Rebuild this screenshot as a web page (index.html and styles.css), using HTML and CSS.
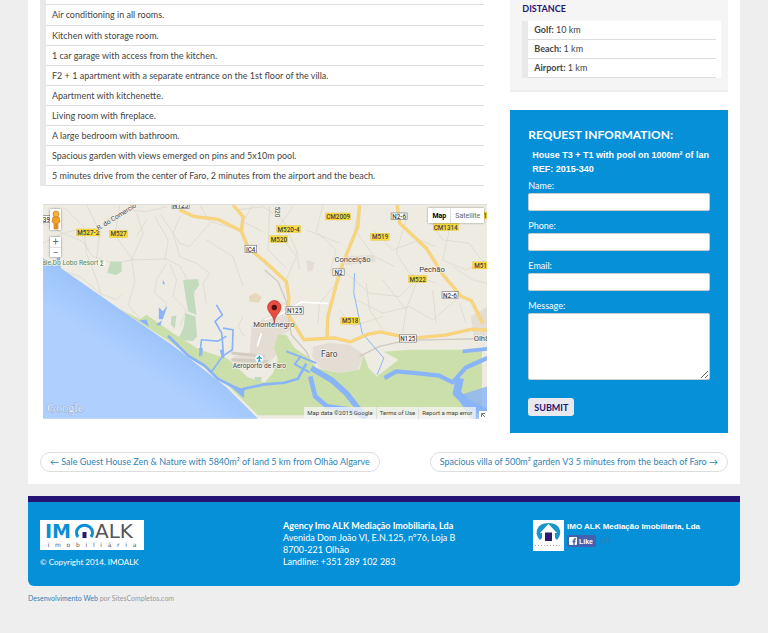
FILE: index.html
```html
<!DOCTYPE html>
<html lang="en">
<head>
  <meta charset="UTF-8">
  <title>House T3 + T1 with pool - IMOALK</title>
  <meta name="viewport" content="width=device-width, initial-scale=1.0">
  <link rel="stylesheet" href="styles.css">
</head>
<body>
  <div class="page">
    <div class="columns">
      <main class="main">
        <ul class="features">
          <li>Air conditioning in all rooms.</li>
          <li>Kitchen with storage room.</li>
          <li>1 car garage with access from the kitchen.</li>
          <li>F2 + 1 apartment with a separate entrance on the 1st floor of the villa.</li>
          <li>Apartment with kitchenette.</li>
          <li>Living room with fireplace.</li>
          <li>A large bedroom with bathroom.</li>
          <li>Spacious garden with views emerged on pins and 5x10m pool.</li>
          <li>5 minutes drive from the center of Faro, 2 minutes from the airport and the beach.</li>
        </ul>

        <!-- Location map -->
        <div class="map">
          <svg class="map-canvas" viewBox="9 15 1335 642" role="img" aria-label="Map of Montenegro, Faro">
            <defs>
              <linearGradient id="sea" gradientUnits="userSpaceOnUse" x1="330" y1="400" x2="270" y2="490">
                <stop offset="0" stop-color="#9ec5fb"/>
                <stop offset="1" stop-color="#aecfff"/>
              </linearGradient>
            </defs>
            <rect x="9" y="15" width="1335" height="642" fill="#eeebe3"/>

            <!-- built-up areas -->
            <g fill="#e3ddd3">
              <path d="M675 355l35-20 35 15 10 40-30 15-8 50-32 40-100 5-5-30 50-10 5-80z"/>
              <path d="M820 440l50-10 60 5 45 30-20 45-55 10-60-15-22-35z"/>
              <path d="M1295 350l49-30v90l-40 5z"/>
              <path d="M800 180l25 8-5 24-15 4z"/>
              <path d="M910 170l90-5 10 20-90 10z"/>
            </g>
            <path d="M575 460l100 10M575 480l110 5" stroke="#d2ccc2" stroke-width="9" fill="none"/>
            <path d="M628 290l20-12 18 14-8 16-28-2z" fill="#e6d9bb"/>

            <!-- local roads -->
            <g fill="none" stroke="#d9d5cd" stroke-width="2">
              <path d="M9 130l60-30 60 25 30 45 60 20 60-10 100-3 40 20 50 90"/>
              <path d="M70 20l60 60 10 80 30 80 15 50M140 15l40 80-10 80M240 15l-15 90 50 70 10 70-20 70 35 40"/>
              <path d="M290 40l20 60-35 80M320 60l-30 50M345 50l40 70-10 60M360 40l60 90 30 10 60-70"/>
              <path d="M420 50l-20 50 20 70 50 20 40 30-20 30 10 60M390 190l20 50-10 50 40 40-20 50"/>
              <path d="M380 190l-30 50-5 40 35 30-10 40M9 70l60 30 40-10M30 200l90 30 60 50 50 20 20-20"/>
              <path d="M200 60l60-30 60 5 60-15M640 15l-30 50 60 30M480 15l30 50 90 25M500 120l80 50 30 90"/>
              <path d="M590 30l80-10 60 40 40 90 10 60M690 20l-5 130 55 55M760 20l-50 70 60 80-30 70"/>
              <path d="M850 15l-20 80 60 55-20 70M800 90l100 40M900 240l-60 70-5 60M960 20l-15 70 60 80 60 30"/>
              <path d="M1000 90l60 60 80-30 50 20M1100 60l-30 100 40 60 80 30M910 210l80 70 90 10 60-60"/>
              <path d="M950 300l80 40 80-20 70 40 70-60M980 250l10 80 40 60M1030 240l70 90-10 70M1130 250l-30 80"/>
              <path d="M1170 60l40 60 80 10 50 70M1230 90l-20 90 70 30 60-30M1180 270l10 100M1260 310l20 60"/>
              <path d="M1240 200l60 40 44 10M900 330l40 50 90-30M700 300l60 20M610 350l-15 30 20 30M655 400l15 35"/>
            </g>
            <g fill="none" stroke="#fff" stroke-width="5">
              <path d="M720 345l65-38 80 4M675 360l45-15M665 400l-12 40"/>
            </g>
            <path d="M675 210l40 35 25 60 15 100 45 50 25 55M960 470l60-30 80-18 244-6" fill="none" stroke="#cfcac4" stroke-width="4"/>

            <!-- woods -->
            <g fill="#c3dbbd">
              <path d="M212 185h33v30l-15 10-28-6z"/>
              <path d="M430 240l45-3 3 20-16 20 8 68-25-10-10-60z"/>
              <path d="M437 340l30 10 5 60-12 14-45-4 16-36z"/>
              <path d="M395 350l15-3-5 40-12-12z"/>
            </g>

            <!-- sea and nature reserve -->
            <path d="M9 175l51 28 180 125 160 110 160 125 95 94H9z" fill="url(#sea)"/>
            <path d="M235 325l65 33 20-13 80 55 80 50 85 28 60 55 50 15 25-28 15-40-12-35 12-40h25l25 40 45 30 20 30 70 15 60-10 13-45 14 40 25 25 65-50-45-24 80-6h216v197H655l-95-94-160-120z" fill="#cbdfaa"/>
            <path d="M645 532h22l-4 15-17-3z" fill="#c3dbbd"/>

            <!-- lagoon channels -->
            <g fill="none" stroke="#8ab4f8" stroke-linejoin="round">
              <path d="M385 408l60 60 50 30 40 40 65 32 75-16 60-5 40-12 25-45" stroke-width="8"/>
              <path d="M530 315l18 30-22 20 20 35 6 75M480 470l5-50 50 4 25-15M550 385l30 5-2 60-30 20-32 45" stroke-width="5"/>
              <path d="M740 455l40 15 50 20M785 468l-20 25 45 25" stroke-width="6"/>
              <path d="M815 505l60 35 45 40 60 77" stroke-width="17"/>
              <path d="M812 530l15 60 35 30 70 10 40 20" stroke-width="14"/>
              <path d="M1035 535l35-20 60 5 70 8 40 20 40-45 64-28" stroke-width="13"/>
              <path d="M1262 535l-10 45 30 30 62 30" stroke-width="24"/>
              <path d="M1270 455l74-8" stroke-width="11"/>
              <path d="M945 220l-2 60 25 120 65 75-20 50" stroke-width="3"/>
            </g>
            <g fill="#8ab4f8">
              <path d="M357 322l12 12 14-16-14 40h-12zM298 362l22-3 8 22zM348 375l18-13-4 15z"/>
              <path d="M50 175l10-3 2 32-10-5zM370 240l6 14-8-2zM560 550l55 20-3 25zM477 445h12l-2 28zM540 450h12l-5 28z"/>
              <path d="M1250 590l94-30v97h-50z" opacity=".8"/>
            </g>

            <!-- main roads -->
            <g fill="none" stroke-linejoin="round">
              <g stroke="#f0d084" stroke-width="10">
                <path d="M420 30l45 20 70 8 70 35 20 50 50 42 65 60 8 50-5 45 50 80 90-6 50 12 50-22 40-8 90 20 105-10 80-18 60 4 66-24"/>
                <path d="M580 15l30 35-5 45M960 15l-5 65-45 110-20 65-25 95-3 65M1073 15l8 55 80 75 50 80 55 65 30 12 35 70"/>
              </g>
              <g stroke="#fbd678" stroke-width="6">
                <path d="M420 30l45 20 70 8 70 35 20 50 50 42 65 60 8 50-5 45 50 80 90-6 50 12 50-22 40-8 90 20 105-10 80-18 60 4 66-24"/>
                <path d="M580 15l30 35-5 45M960 15l-5 65-45 110-20 65-25 95-3 65M1073 15l8 55 80 75 50 80 55 65 30 12 35 70"/>
              </g>
            </g>

            <!-- road shields -->
            <g class="shield-yellow">
              <rect x="110" y="87" width="70" height="21"/><text x="145" y="105">M527-2</text>
              <rect x="209" y="91" width="54" height="22"/><text x="236" y="109">M527</text>
              <rect x="858" y="39" width="75" height="21"/><text x="896" y="57">CM2009</text>
              <rect x="711" y="77" width="72" height="21"/><text x="747" y="95">M520-4</text>
              <rect x="691" y="107" width="53" height="21"/><text x="718" y="125">M520</text>
              <rect x="994" y="100" width="55" height="21"/><text x="1022" y="118">M519</text>
              <rect x="1182" y="71" width="75" height="21"/><text x="1219" y="89">CM1314</text>
              <rect x="1107" y="227" width="55" height="21"/><text x="1135" y="245">M522</text>
              <rect x="1300" y="186" width="55" height="21"/><text x="1329" y="204">M516</text>
              <rect x="904" y="352" width="55" height="21"/><text x="932" y="370">M518</text>
              <rect x="1330" y="36" width="30" height="21"/><text x="1338" y="54">1</text>
            </g>
            <g class="shield-white">
              <rect x="-5" y="47" width="46" height="20"/><text x="18" y="65">N396</text>
              <rect x="397" y="6" width="51" height="20"/><text x="422" y="24">N125</text>
              <rect x="616" y="136" width="35" height="22"/><text x="633" y="155">IC4</text>
              <rect x="1055" y="39" width="48" height="20"/><text x="1079" y="57">N2-6</text>
              <rect x="880" y="207" width="34" height="20"/><text x="897" y="225">N2</text>
              <rect x="1208" y="275" width="48" height="20"/><text x="1232" y="293">N2-6</text>
              <rect x="739" y="321" width="52" height="22"/><text x="765" y="340">N125</text>
              <rect x="1080" y="405" width="51" height="22"/><text x="1105" y="424">N125</text>
            </g>

            <!-- place names -->
            <g class="place">
              <text x="939" y="187">Conceição</text>
              <text x="1178" y="216">Pechão</text>
              <text x="703" y="382">Montenegro</text>
              <text class="city" x="869" y="471">Faro</text>
              <text x="1333" y="424">Olhão</text>
              <text class="small" x="659" y="506">Aeroporto de Faro</text>
              <text class="park" x="91" y="196">ale Do Lobo Resort</text>
              <text class="small" x="233" y="56" transform="rotate(-32 233 56)">R. do Comercio</text>
              <text class="small" x="718" y="36" transform="rotate(90 712 30)">520</text>
            </g>
            <circle cx="186" cy="190" r="12" fill="#f6f5ee"/>
            <path d="M190 183h-8l5 7-5 7h8" fill="none" stroke="#5d9b63" stroke-width="3"/>
            <circle cx="659" cy="476" r="13" fill="#fff" stroke="#b9d9e8" stroke-width="2"/>
            <path d="M659 467v17M651 477l8-5 8 5M655 484h8" fill="none" stroke="#2ba3cf" stroke-width="4"/>

            <!-- marker -->
            <path d="M704 371c0-26-20-31-20-49a20 20 0 0 1 40 0c0 18-20 23-20 49z" fill="#ea4b43" stroke="#a72c26" stroke-width="2"/>
            <circle cx="704" cy="323" r="8" fill="#4f100d"/>
            <text class="watermark" x="21" y="637">Google</text>
          </svg>

          <div class="map-tools">
            <button class="pegman" type="button" aria-label="Street View">
              <svg viewBox="0 0 10 20" width="10" height="20">
                <path d="M2 7h6l1 5-2 1v6H3v-6l-2-1z" fill="#f3a229" stroke="#c87a12" stroke-width=".7"/>
                <circle cx="5" cy="4" r="3" fill="#f7b344" stroke="#c87a12" stroke-width=".7"/>
                <path d="M5 13v5" stroke="#c87a12"/>
              </svg>
            </button>
            <div class="zoom">
              <button type="button" aria-label="Zoom in">+</button>
              <button type="button" aria-label="Zoom out">−</button>
            </div>
          </div>
          <div class="map-types">
            <button class="active" type="button">Map</button>
            <button type="button">Satellite</button>
          </div>
          <div class="map-legal">
            <span>Map data ©2015 Google</span>
            <a href="#">Terms of Use</a>
            <a href="#">Report a map error</a>
          </div>
          <button class="map-expand" type="button" aria-label="Overview map">
            <svg viewBox="0 0 8 8" width="8" height="8"><path d="M2.500 6V2.500H6M2.500 2.500l3.500 3.500" fill="none" stroke="#777"/></svg>
          </button>
        </div>
      </main>

      <aside class="sidebar">
        <section class="distance">
          <h3>DISTANCE</h3>
          <ul>
            <li><strong>Golf:</strong> 10 km</li>
            <li><strong>Beach:</strong> 1 km</li>
            <li><strong>Airport:</strong> 1 km</li>
          </ul>
        </section>

        <form class="request">
          <h2>REQUEST INFORMATION:</h2>
          <input class="plain" type="text" aria-label="Property" value="House T3 + T1 with pool on 1000m² of lan" readonly>
          <input class="plain" type="text" aria-label="Reference" value="REF: 2015-340" readonly>
          <label for="name">Name:</label>
          <input class="field" type="text" id="name">
          <label for="phone">Phone:</label>
          <input class="field" type="text" id="phone">
          <label for="email">Email:</label>
          <input class="field" type="email" id="email">
          <label for="message">Message:</label>
          <textarea class="field" id="message"></textarea>
          <button class="submit" type="submit">SUBMIT</button>
        </form>
      </aside>
    </div>

    <nav class="pager">
      <a href="#">← Sale Guest House Zen &amp; Nature with 5840m² of land 5 km from Olhão Algarve</a>
      <a href="#">Spacious villa of 500m² garden V3 5 minutes from the beach of Faro →</a>
    </nav>
  </div>

  <footer class="footer">
    <div class="brand">
      <svg class="logo" viewBox="0 0 104 30" role="img" aria-label="IMOALK imobiliária">
        <rect width="104" height="30" fill="#fff"/>
        <text class="logo-imo" x="5" y="18">IM</text>
        <path d="M38 17a8 7.500 0 1 1 13 0" fill="none" stroke="#0a8ed6" stroke-width="3"/>
        <path d="M44.500 7l7 6h-2v6h-10v-6h-2z" fill="#fff"/>
        <path d="M42.500 12h4v6h-4z" fill="#2a1a73"/>
        <text class="logo-alk" x="55" y="18">ALK</text>
        <text class="logo-sub" x="52" y="27">i   m   o   b   i   l   i   á   r   i   a</text>
      </svg>
      <p class="copyright">© Copyright 2014. IMOALK</p>
    </div>
    <address class="agency">
      <strong>Agency Imo ALK Mediação Imobiliaria, Lda</strong><br>
      Avenida Dom João VI, E.N.125, nº76, Loja B<br>
      8700-221 Olhão<br>
      Landline: +351 289 102 283
    </address>
    <div class="social">
      <svg class="social-logo" viewBox="0 0 31 31" aria-hidden="true">
        <rect width="31" height="31" fill="#fff"/>
        <path d="M7 20C1 14 3 3 15.500 3S30 14 24 20l-2-2V12l-6.500-7L9 12v6z" fill="#1a95c9"/>
        <path d="M15.500 4L24 13h-2v8H9v-8H7z" fill="#fff"/>
        <path d="M12 12.500h7V21h-7z" fill="#2a1a73"/>
        <path d="M2 25.500h27" stroke="#aaa" stroke-dasharray="1 2"/>
      </svg>
      <div>
        <a class="social-name" href="#">IMO ALK Mediação Imobiliaria, Lda</a>
        <div class="like-row">
          <button class="like" type="button">
            <svg viewBox="0 0 8 8" width="8" height="8"><rect width="8" height="8" rx="1" fill="#fff"/><path d="M5 8V3q0-1 1-1h1M3.500 4.500h3" fill="none" stroke="#4460a0" stroke-width="1.300"/></svg>
            Like
          </button>
          <span class="like-count">187</span>
        </div>
      </div>
    </div>
  </footer>
  <p class="credits"><a href="#">Desenvolvimento Web</a> por SitesCompletos.com</p>
</body>
</html>
```
FILE: styles.css
```css
* {
  box-sizing: border-box;
}
body {
  margin: 0;
  padding: 0 28px;
  background-color: #eee;
  color: #444;
  font-family: Lato, sans-serif;
  font-size: 9px;
  line-height: 12px;
}
h2, h3, p, ul {
  margin: 0;
  padding: 0;
}
ul {
  list-style: none;
}
button, input, textarea {
  font-family: inherit;
  margin: 0;
}
a {
  color: #2f83b5;
  text-decoration: none;
}

/* Content */
.page {
  background-color: #fff;
  padding: 0 12px 12px;
}
.columns {
  display: grid;
  grid-template-columns: minmax(0, 448fr) minmax(0, 218fr);
  column-gap: 23px;
}
.features {
  margin-right: 3px;
  padding-top: 4px;
  border-left: 6px solid #e9e9e9;
}
.features li {
  padding-left: 6px;
  line-height: 19px;
  border-bottom: 1px solid #ddd;
}
.features li:first-child {
  border-top: 1px solid #ddd;
  line-height: 20px;
}

/* Map */
.map {
  position: relative;
  margin: 18px 0 0 3px;
  border-top: 1px solid #ddd;
  overflow: hidden;
  font-family: Roboto, sans-serif;
}
.map-canvas {
  display: block;
  width: 100%;
}
.shield-yellow rect {
  fill: #f9dc3e;
  stroke: #d8b92c;
}
.shield-white rect {
  fill: #fff;
  stroke: #777;
  stroke-width: 2px;
}
.shield-yellow text, .shield-white text {
  font-size: 19px;
  font-weight: 500;
  fill: #444;
  text-anchor: middle;
}
.place text {
  font-size: 23px;
  fill: #444;
  stroke: #f4f2ec;
  stroke-width: 4px;
  paint-order: stroke;
  text-anchor: middle;
}
.place .city {
  font-size: 25px;
}
.place .small {
  font-size: 20px;
}
.place .park {
  font-size: 20px;
  fill: #4e8a5b;
}
.watermark {
  font-family: "Liberation Serif", serif;
  font-size: 37px;
  fill: #e6f0ff;
  stroke: #7c93b5;
  stroke-width: 2px;
  paint-order: stroke;
}
.map-tools {
  position: absolute;
  top: 4px;
  left: 7px;
  width: 11px;
}
.map button {
  display: block;
  padding: 0;
  border: 0;
  background-color: #fff;
  color: #666;
}
.map .pegman {
  width: 11px;
  height: 21px;
  box-shadow: 0 0 2px rgba(0,0,0,0.5);
}
.pegman svg {
  display: block;
  margin: 0 auto;
}
.zoom {
  margin-top: 7px;
  box-shadow: 0 0 2px rgba(0,0,0,0.5);
}
.map .zoom button {
  width: 11px;
  height: 10px;
  font-size: 10px;
  line-height: 10px;
}
.map .zoom button + button {
  border-top: 1px solid #ddd;
}
.map-types {
  position: absolute;
  top: 3px;
  right: 3px;
  display: flex;
  box-shadow: 0 0 2px rgba(0,0,0,0.4);
}
.map .map-types button {
  height: 15px;
  padding: 0 4px;
  font-size: 7px;
}
.map .map-types button + button {
  border-left: 1px solid #ddd;
}
.map .map-types .active {
  color: #000;
  font-weight: bold;
}
.map-legal {
  position: absolute;
  right: 11px;
  bottom: 0;
  display: flex;
  font-size: 6px;
  line-height: 12px;
}
.map-legal > * {
  padding: 0 3px;
  background-color: rgba(245,245,245,0.75);
  color: #444;
  border-right: 1px solid #ddd;
}
.map .map-expand {
  position: absolute;
  right: 0;
  bottom: 0;
  width: 8px;
  height: 8px;
}
.map-expand svg {
  display: block;
}

/* Sidebar */
.distance {
  padding: 3px 7px 12px 12px;
  background-color: #f5f5f5;
  border-bottom: 2px solid #eee;
}
.distance h3 {
  margin-bottom: 6px;
  font-size: 9px;
  line-height: 12px;
  color: #261574;
}
.distance ul {
  padding-right: 5px;
  background-color: #fff;
  border-left: 6px solid #e9e9e9;
}
.distance li {
  padding-left: 6px;
  line-height: 18px;
  border-bottom: 1px solid #ddd;
}
.request {
  display: flex;
  flex-direction: column;
  align-items: flex-start;
  margin-top: 18px;
  padding: 18px 18px 17px;
  background-color: #0590d8;
  color: #fff;
}
.request h2 {
  margin-bottom: 6px;
  font-size: 12px;
  line-height: 14px;
}
.request .plain {
  width: 100%;
  height: 14px;
  padding: 0 0 0 4px;
  border: 0;
  background: none;
  color: #fff;
  font-family: "Liberation Sans", Arial, sans-serif;
  font-size: 9px;
  font-weight: bold;
}
.request label {
  padding-top: 4px;
  line-height: 12px;
}
.request .field {
  width: 100%;
  height: 18px;
  margin: 1px 0 5px;
  padding: 2px 4px;
  border: 1px solid #ccc;
  border-radius: 2px;
  background-color: #fff;
  color: #777;
  font-size: 9px;
}
.request textarea.field {
  height: 67px;
  resize: vertical;
}
.request .submit {
  margin-top: 13px;
  height: 18px;
  padding: 0 6px;
  border: 0;
  border-radius: 3px;
  background-color: #e8e8ee;
  color: #261574;
  font-size: 9px;
  font-weight: bold;
  cursor: pointer;
}

/* Previous / next property */
.pager {
  display: flex;
  justify-content: space-between;
  margin-top: 19px;
}
.pager a {
  padding: 0 9px;
  line-height: 18px;
  border: 1px solid #ddd;
  border-radius: 10px;
}

/* Footer */
.footer {
  display: grid;
  grid-template-columns: 243fr 250fr 195fr;
  margin-top: 12px;
  padding: 18px 12px;
  background-color: #0590d8;
  border-top: 6px solid #261574;
  border-radius: 0 0 6px 6px;
  color: #fff;
}
.logo {
  display: block;
  width: 104px;
  margin-bottom: 6px;
}
.logo-imo {
  font-family: "DejaVu Sans", sans-serif;
  font-size: 19px;
  font-weight: bold;
  fill: #0a8ed6;
}
.logo-alk {
  font-family: "DejaVu Sans", sans-serif;
  font-size: 20px;
  fill: #555;
}
.logo-sub {
  font-family: "DejaVu Sans", sans-serif;
  font-size: 6px;
  fill: #555;
  text-anchor: middle;
  white-space: pre;
}
.copyright {
  font-size: 8px;
}
.agency {
  font-style: normal;
}
.social {
  display: flex;
  gap: 3px;
  font-family: "Liberation Sans", Arial, sans-serif;
}
.social-logo {
  width: 31px;
  height: 31px;
}
.social-name {
  color: #fff;
  font-size: 8px;
  font-weight: bold;
}
.like-row {
  display: flex;
  align-items: center;
  gap: 4px;
  margin-top: 2px;
}
.like {
  display: flex;
  align-items: center;
  gap: 2px;
  height: 12px;
  padding: 0 3px 0 2px;
  border: 0;
  border-radius: 1px;
  background-color: #4460b0;
  color: #fff;
  font-size: 7px;
  font-weight: bold;
}
.like-count {
  color: #3a7fae;
  font-size: 7px;
}
.credits {
  margin-top: 6px;
  padding-bottom: 24px;
  font-size: 7px;
  color: #999;
}
```
